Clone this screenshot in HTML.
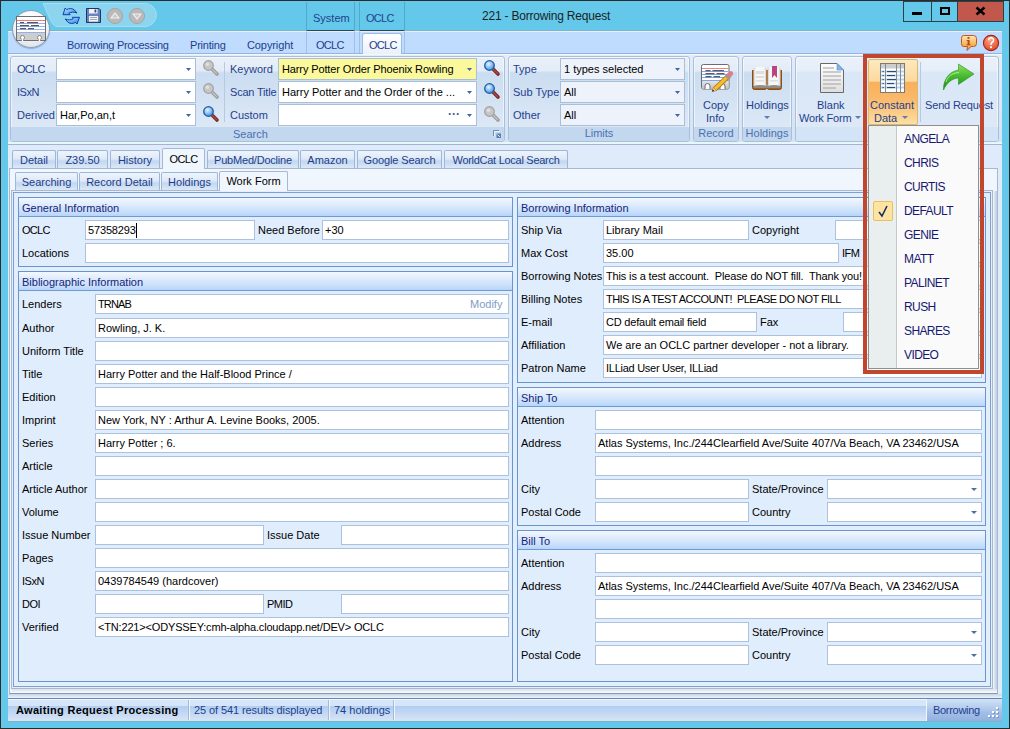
<!DOCTYPE html><html><head><meta charset='utf-8'><style>
*{margin:0;padding:0;box-sizing:border-box}
html,body{width:1010px;height:729px;overflow:hidden;background:#2b2b2b}
body{position:relative;font-family:"Liberation Sans",sans-serif;font-size:11px;color:#000}
div,span{position:absolute}
.t{white-space:pre;line-height:13px}
.fld{background:#fff;border:1px solid #abc1de}
.lbl{white-space:pre;line-height:13px;color:#000}
.grp{border:1px solid #6895d2;background:#e0edfc}
.gh{background:linear-gradient(#f3f8fe 0%,#e2eefd 30%,#c9e0fb 75%,#b7d5fa 100%);border-bottom:1px solid #6f9ad6}
.ght{white-space:pre;line-height:13px;color:#15237a}
.tab{border:1px solid #9db7da;border-bottom:none;border-radius:2px 2px 0 0;background:linear-gradient(#eef4fb 0%,#dfeaf7 45%,#c3d7f0 60%,#dce8f6 100%)}
.tabt{white-space:pre;line-height:13px;color:#1d3e8a}
.rg{border:1px solid #a9c0dc;border-radius:3px;background:linear-gradient(#e9f0f9 0%,#e3ecf7 16%,#cbddf1 19%,#d6e4f4 60%,#e1ebf7 100%);box-shadow:inset 0 0 0 1px rgba(255,255,255,.55)}
.rgl{background:#c3d7ee}
.rgt{white-space:pre;line-height:13px;color:#4a72b0;text-align:center}
.rl{white-space:pre;line-height:13px;color:#1e3f8c}
.mi{white-space:pre;line-height:14px;color:#17186f;font-size:12px;letter-spacing:-.6px}
</style></head><body><div style="left:1px;top:1px;width:1008px;height:727px;background:#63c8ea"></div>
<div class="t" style="left:482px;top:8px;letter-spacing:-0.2px;font-size:12px;line-height:16px;color:#1a1f22">221 - Borrowing Request</div>
<div style="left:903px;top:1px;width:29px;height:21px;border:1px solid #2d3f48;background:#63c8ea"></div>
<div style="left:931px;top:1px;width:27px;height:21px;border:1px solid #2d3f48;background:#63c8ea"></div>
<div style="left:957px;top:1px;width:47px;height:21px;border:1px solid #2d3f48;background:#c1584b"></div>
<div style="left:912px;top:12px;width:10px;height:3px;background:#000"></div>
<div style="left:940px;top:7px;width:10px;height:8px;border:2px solid #000"></div>
<svg style="position:absolute;left:975px;top:6px" width="11" height="10"><path d="M1.5 1.5 L9.5 8.5 M9.5 1.5 L1.5 8.5" stroke="#000" stroke-width="2.4" stroke-linecap="butt"/></svg>
<svg style="position:absolute;left:38px;top:2px" width="124" height="27" viewBox="0 0 124 27">
<path d="M5 1.5 H107 A11.5 11.5 0 0 1 107 24.5 H19 C14 24.5 12 16 5 1.5 Z" fill="#8dd4ee" stroke="#a3def3" stroke-width="1"/>
</svg>
<div style="left:12px;top:10px;width:38px;height:38px;border-radius:50%;background:radial-gradient(circle at 50% 30%,#ffffff 0%,#f4f6f8 50%,#dde3ea 85%,#c9d2dc 100%);border:1px solid #8d9eb3;box-shadow:0 1px 1px rgba(40,60,90,.3);z-index:20"></div>
<svg style="position:absolute;left:16px;top:16px;z-index:21" width="31" height="26" viewBox="0 0 31 26">
<rect x=".5" y=".5" width="29" height="24" fill="#fff" stroke="#6f6f6f"/>
<line x1="1" y1="4.5" x2="29" y2="4.5" stroke="#f07a7a"/>
<line x1="1" y1="7.5" x2="29" y2="7.5" stroke="#8fb2ee"/>
<line x1="1" y1="10.5" x2="29" y2="10.5" stroke="#8fb2ee"/>
<line x1="1" y1="13.5" x2="29" y2="13.5" stroke="#8fb2ee"/>
<line x1="1" y1="16.5" x2="29" y2="16.5" stroke="#8fb2ee"/>
<g fill="#5a5a5a"><rect x="4" y="6" width="4" height="1.2"/><rect x="11" y="6" width="11" height="1.2"/>
<rect x="4" y="9" width="9" height="1.2"/><rect x="15" y="9" width="8" height="1.2"/>
<rect x="4" y="12" width="6" height="1.2"/><rect x="12" y="12" width="6" height="1.2"/></g>
<path d="M1 17 H29 V24.5 H1 Z" fill="#cdcdcd"/>
<path d="M.5 17 V24.5 H29.5 V17" fill="none" stroke="#6f6f6f"/>
<circle cx="6.5" cy="21.5" r="2" fill="#fff" stroke="#707070" stroke-width=".8"/><circle cx="23.5" cy="21.5" r="2" fill="#fff" stroke="#707070" stroke-width=".8"/>
<rect x="5.8" y="22" width="1.4" height="3" fill="#fff"/><rect x="22.8" y="22" width="1.4" height="3" fill="#fff"/>
</svg>
<svg style="position:absolute;left:60px;top:5px" width="24" height="22" viewBox="0 0 24 22">
<defs><linearGradient id="rg1" x1="0" y1="0" x2="1" y2="1"><stop offset="0" stop-color="#e8f6ff"/><stop offset=".5" stop-color="#6fb4f2"/><stop offset="1" stop-color="#2f7ee0"/></linearGradient></defs>
<path d="M3 9.7 L5.2 3 L6.6 4.6 C9 3.3 12 3.1 14.2 4.8 L17 8 C14.2 6.8 11.2 6.8 9 8.2 L10.2 9.7 Z" fill="url(#rg1)" stroke="#0b3fae" stroke-width="1" stroke-linejoin="round"/>
<path d="M19.5 12.3 L17 19 L15.6 17.4 C13.2 18.7 10.2 18.9 8 17.2 L5.2 14 C8 15.2 11 15.2 13.2 13.8 L12.2 12.3 Z" fill="url(#rg1)" stroke="#0b3fae" stroke-width="1" stroke-linejoin="round"/>
</svg>
<svg style="position:absolute;left:86px;top:8px" width="15" height="15" viewBox="0 0 15 15">
<path d="M.5 .5 H13 L14.5 2 V14.5 H.5 Z" fill="#6583c9" stroke="#22335f"/>
<rect x="3" y="1" width="8.5" height="4.5" fill="#f2f5fb"/><rect x="8.5" y="1.5" width="1.8" height="3" fill="#3a4f86"/>
<rect x="2.5" y="7.5" width="10" height="6.5" fill="#f4f4f4" stroke="#4a5f9a" stroke-width=".6"/>
<line x1="4" y1="9.5" x2="11" y2="9.5" stroke="#9aa4b8"/><line x1="4" y1="11.5" x2="11" y2="11.5" stroke="#9aa4b8"/>
</svg>
<svg style="position:absolute;left:105px;top:6px" width="20" height="20" viewBox="0 0 20 20">
<circle cx="10" cy="10" r="7.6" fill="#b9b9b9" stroke="#a3a3a3" stroke-width=".9"/>
<path d="M6 12 L10 7 L14 12 Z" fill="#c8c8c8" stroke="#f2f2f2" stroke-width="1.2" stroke-linejoin="round"/>
</svg>
<svg style="position:absolute;left:127px;top:6px" width="20" height="20" viewBox="0 0 20 20">
<circle cx="10" cy="10" r="7.6" fill="#b9b9b9" stroke="#a3a3a3" stroke-width=".9"/>
<path d="M6 8 L14 8 L10 13 Z" fill="#c8c8c8" stroke="#f2f2f2" stroke-width="1.2" stroke-linejoin="round"/>
</svg>
<div style="left:8px;top:30px;width:994px;height:1px;background:#7eb3c9"></div>
<div style="left:8px;top:31px;width:994px;height:1px;background:#e4effb"></div>
<div style="left:8px;top:32px;width:994px;height:21px;background:#bfdbfe"></div>
<div style="left:8px;top:53px;width:994px;height:1px;background:#92b5e4"></div>
<div style="left:306px;top:2px;width:1px;height:29px;background:rgba(60,110,140,.35)"></div>
<div style="left:306px;top:31px;width:1px;height:22px;background:rgba(90,130,180,.3)"></div>
<div style="left:354px;top:2px;width:1px;height:29px;background:rgba(60,110,140,.35)"></div>
<div style="left:354px;top:31px;width:1px;height:22px;background:rgba(90,130,180,.3)"></div>
<div style="left:359px;top:2px;width:1px;height:29px;background:rgba(60,110,140,.35)"></div>
<div style="left:359px;top:31px;width:1px;height:22px;background:rgba(90,130,180,.3)"></div>
<div style="left:404px;top:2px;width:1px;height:29px;background:rgba(60,110,140,.35)"></div>
<div style="left:404px;top:31px;width:1px;height:22px;background:rgba(90,130,180,.3)"></div>
<div style="left:307px;top:30px;width:47px;height:1px;background:#2a4756"></div>
<div style="left:360px;top:30px;width:44px;height:1px;background:#2a4756"></div>
<div class="t" style="left:313px;top:12px;color:#20448a">System</div>
<div class="t" style="left:366px;top:12px;letter-spacing:-0.7px;color:#20448a">OCLC</div>
<div class="t" style="left:67px;top:39px;color:#1d3f8d;letter-spacing:-.27px">Borrowing Processing</div>
<div class="t" style="left:190px;top:39px;color:#1d3f8d;letter-spacing:-.2px">Printing</div>
<div class="t" style="left:247px;top:39px;color:#1d3f8d;letter-spacing:-.1px">Copyright</div>
<div class="t" style="left:316px;top:39px;letter-spacing:-0.7px;color:#1d3f8d">OCLC</div>
<div style="left:362px;top:33px;width:40px;height:22px;background:linear-gradient(#ffffff,#e9f0fa);border:1px solid #9dbbe3;border-bottom:none;border-radius:3px 3px 0 0"></div>
<div class="t" style="left:369px;top:39px;letter-spacing:-0.7px;color:#1d3f8d">OCLC</div>
<svg style="position:absolute;left:960px;top:34px" width="18" height="18" viewBox="0 0 18 18">
<defs><linearGradient id="ig" x1="0" y1="0" x2="0" y2="1"><stop offset="0" stop-color="#fee6b0"/><stop offset=".6" stop-color="#f8b454"/><stop offset="1" stop-color="#f49a2c"/></linearGradient></defs>
<path d="M3.5 1.5 H13.5 Q16.5 1.5 16.5 4.5 V9.5 Q16.5 12.5 13.5 12.5 H11 L7 16.5 L7.5 12.5 H3.5 Q1.5 12.5 1.5 9.5 V4.5 Q1.5 1.5 3.5 1.5 Z" fill="url(#ig)" stroke="#c4561c" stroke-width="1"/>
<rect x="7.5" y="3" width="2" height="1.8" fill="#b4481e"/>
<path d="M6.7 6 H9.6 V10.2 H10.6 V11.3 H6.6 V10.2 H7.6 V7 H6.7 Z" fill="#b4481e"/>
</svg>
<svg style="position:absolute;left:982px;top:34px" width="18" height="18" viewBox="0 0 18 18">
<defs><radialGradient id="hg" cx=".45" cy=".3" r=".75"><stop offset="0" stop-color="#fca88a"/><stop offset=".6" stop-color="#ec6a48"/><stop offset="1" stop-color="#d8482a"/></radialGradient></defs>
<circle cx="9" cy="9" r="7.6" fill="url(#hg)" stroke="#a8200e" stroke-width="1.1"/>
<path d="M6.6 6.2 Q6.8 3.8 9.2 3.8 Q11.6 3.9 11.5 6.2 Q11.4 7.6 9.8 8.6 Q8.9 9.3 9 11" fill="none" stroke="#fff" stroke-width="1.5"/>
<rect x="8.1" y="12.3" width="1.8" height="1.8" fill="#fff"/>
</svg>
<div style="left:8px;top:54px;width:994px;height:88px;background:linear-gradient(#e3ecf7,#d5e3f4);border-top:1px solid #f4f8fc"></div>
<div style="left:8px;top:142px;width:994px;height:2px;background:#e6f8fd"></div>
<div style="left:8px;top:144px;width:994px;height:1px;background:#a2b5cc"></div>
<div style="left:8px;top:145px;width:994px;height:554px;background:#dfeafb"></div>
<div class="rg" style="left:10px;top:56px;width:495px;height:86px;"></div>
<div class="rgl" style="left:11px;top:127px;width:493px;height:14px;border-radius:0 0 2px 2px"></div>
<div class="rgt" style="left:233px;top:128px">Search</div>
<div class="rg" style="left:508px;top:56px;width:182px;height:86px;"></div>
<div class="rgl" style="left:509px;top:127px;width:180px;height:14px;border-radius:0 0 2px 2px"></div>
<div class="rgt" style="left:508px;top:127px;width:182px">Limits</div>
<div class="rg" style="left:693px;top:56px;width:46px;height:86px;"></div>
<div class="rgl" style="left:694px;top:127px;width:44px;height:14px;border-radius:0 0 2px 2px"></div>
<div class="rgt" style="left:693px;top:127px;width:46px">Record</div>
<div class="rg" style="left:742px;top:56px;width:50px;height:86px;"></div>
<div class="rgl" style="left:743px;top:127px;width:48px;height:14px;border-radius:0 0 2px 2px"></div>
<div class="rgt" style="left:742px;top:127px;width:50px">Holdings</div>
<div class="rg" style="left:795px;top:56px;width:204px;height:86px;background:linear-gradient(#eaf1fa 0%,#e6eef9 16%,#dae7f6 19%,#dde9f7 100%)"></div>
<div class="rgl" style="left:796px;top:127px;width:202px;height:14px;border-radius:0 0 2px 2px;background:#d3e4f7"></div>
<div class="rl" style="left:17px;top:63px;letter-spacing:-0.7px;">OCLC</div>
<div style="left:56px;top:58px;width:140px;height:22px;background:#fff;border:1px solid #a9bfd8"></div>
<svg style="position:absolute;left:185px;top:68px" width="7" height="4" viewBox="0 0 7 4"><path d="M1 0 H6 L3.5 3 Z" fill="#3d66a8"/></svg>
<svg style="position:absolute;left:202px;top:59px" width="18" height="18" viewBox="0 0 18 18">
<line x1="10.5" y1="10.5" x2="15" y2="15" stroke="#9c9c9c" stroke-width="3.6" stroke-linecap="round"/>
<line x1="10.5" y1="10.5" x2="14.5" y2="14.5" stroke="#c4c4c4" stroke-width="1.2" stroke-linecap="round"/>
<circle cx="6.5" cy="6.5" r="4.8" fill="#c6c6c6" stroke="#a2a2a2" stroke-width="1.2"/>
<circle cx="5.5" cy="5.3" r="1.8" fill="#e0e0e0"/>
</svg>
<div class="rl" style="left:17px;top:86px;letter-spacing:-0.5px;">ISxN</div>
<div style="left:56px;top:81px;width:140px;height:22px;background:#fff;border:1px solid #a9bfd8"></div>
<svg style="position:absolute;left:185px;top:91px" width="7" height="4" viewBox="0 0 7 4"><path d="M1 0 H6 L3.5 3 Z" fill="#3d66a8"/></svg>
<svg style="position:absolute;left:202px;top:82px" width="18" height="18" viewBox="0 0 18 18">
<line x1="10.5" y1="10.5" x2="15" y2="15" stroke="#9c9c9c" stroke-width="3.6" stroke-linecap="round"/>
<line x1="10.5" y1="10.5" x2="14.5" y2="14.5" stroke="#c4c4c4" stroke-width="1.2" stroke-linecap="round"/>
<circle cx="6.5" cy="6.5" r="4.8" fill="#c6c6c6" stroke="#a2a2a2" stroke-width="1.2"/>
<circle cx="5.5" cy="5.3" r="1.8" fill="#e0e0e0"/>
</svg>
<div class="rl" style="left:17px;top:109px;">Derived</div>
<div style="left:56px;top:104px;width:140px;height:22px;background:#fff;border:1px solid #a9bfd8"></div>
<div class="t" style="left:60px;top:109px;">Har,Po,an,t</div>
<svg style="position:absolute;left:185px;top:114px" width="7" height="4" viewBox="0 0 7 4"><path d="M1 0 H6 L3.5 3 Z" fill="#3d66a8"/></svg>
<svg style="position:absolute;left:202px;top:105px" width="18" height="18" viewBox="0 0 18 18">
<defs><radialGradient id="bl202105" cx=".4" cy=".35" r=".7"><stop offset="0" stop-color="#e6f4ff"/><stop offset=".5" stop-color="#8ec3f5"/><stop offset="1" stop-color="#3c82d6"/></radialGradient></defs>
<line x1="10.5" y1="10.5" x2="15" y2="15" stroke="#7a2a26" stroke-width="3.6" stroke-linecap="round"/>
<line x1="10.5" y1="10.5" x2="14.5" y2="14.5" stroke="#a84a44" stroke-width="1.4" stroke-linecap="round"/>
<circle cx="6.5" cy="6.5" r="4.8" fill="url(#bl202105)" stroke="#1f5ea8" stroke-width="1.3"/>
</svg>
<div style="left:224px;top:62px;width:1px;height:60px;background:#b6c9e0"></div>
<div class="rl" style="left:230px;top:63px;">Keyword</div>
<div class="rl" style="left:230px;top:86px;letter-spacing:-0.2px;">Scan Title</div>
<div class="rl" style="left:230px;top:109px;">Custom</div>
<div style="left:278px;top:58px;width:199px;height:22px;background:#fbf99c;border:1px solid #a9bfd8"></div>
<div class="t" style="left:282px;top:63px;letter-spacing:-0.12px;">Harry Potter Order Phoenix Rowling</div>
<svg style="position:absolute;left:466px;top:68px" width="7" height="4" viewBox="0 0 7 4"><path d="M1 0 H6 L3.5 3 Z" fill="#3d66a8"/></svg>
<div style="left:278px;top:81px;width:199px;height:22px;background:#fff;border:1px solid #a9bfd8"></div>
<div class="t" style="left:282px;top:86px;">Harry Potter and the Order of the ...</div>
<svg style="position:absolute;left:466px;top:91px" width="7" height="4" viewBox="0 0 7 4"><path d="M1 0 H6 L3.5 3 Z" fill="#3d66a8"/></svg>
<div style="left:278px;top:104px;width:199px;height:22px;background:#fff;border:1px solid #a9bfd8"></div>
<svg style="position:absolute;left:466px;top:114px" width="7" height="4" viewBox="0 0 7 4"><path d="M1 0 H6 L3.5 3 Z" fill="#3d66a8"/></svg>
<div class="t" style="left:448px;top:108px;color:#3c5c9c;font-size:12px;font-weight:bold">···</div>
<svg style="position:absolute;left:483px;top:59px" width="18" height="18" viewBox="0 0 18 18">
<defs><radialGradient id="bl48359" cx=".4" cy=".35" r=".7"><stop offset="0" stop-color="#e6f4ff"/><stop offset=".5" stop-color="#8ec3f5"/><stop offset="1" stop-color="#3c82d6"/></radialGradient></defs>
<line x1="10.5" y1="10.5" x2="15" y2="15" stroke="#7a2a26" stroke-width="3.6" stroke-linecap="round"/>
<line x1="10.5" y1="10.5" x2="14.5" y2="14.5" stroke="#a84a44" stroke-width="1.4" stroke-linecap="round"/>
<circle cx="6.5" cy="6.5" r="4.8" fill="url(#bl48359)" stroke="#1f5ea8" stroke-width="1.3"/>
</svg>
<svg style="position:absolute;left:483px;top:82px" width="18" height="18" viewBox="0 0 18 18">
<defs><radialGradient id="bl48382" cx=".4" cy=".35" r=".7"><stop offset="0" stop-color="#e6f4ff"/><stop offset=".5" stop-color="#8ec3f5"/><stop offset="1" stop-color="#3c82d6"/></radialGradient></defs>
<line x1="10.5" y1="10.5" x2="15" y2="15" stroke="#7a2a26" stroke-width="3.6" stroke-linecap="round"/>
<line x1="10.5" y1="10.5" x2="14.5" y2="14.5" stroke="#a84a44" stroke-width="1.4" stroke-linecap="round"/>
<circle cx="6.5" cy="6.5" r="4.8" fill="url(#bl48382)" stroke="#1f5ea8" stroke-width="1.3"/>
</svg>
<svg style="position:absolute;left:483px;top:105px" width="18" height="18" viewBox="0 0 18 18">
<line x1="10.5" y1="10.5" x2="15" y2="15" stroke="#9c9c9c" stroke-width="3.6" stroke-linecap="round"/>
<line x1="10.5" y1="10.5" x2="14.5" y2="14.5" stroke="#c4c4c4" stroke-width="1.2" stroke-linecap="round"/>
<circle cx="6.5" cy="6.5" r="4.8" fill="#c6c6c6" stroke="#a2a2a2" stroke-width="1.2"/>
<circle cx="5.5" cy="5.3" r="1.8" fill="#e0e0e0"/>
</svg>
<svg style="position:absolute;left:493px;top:130px" width="9" height="9" viewBox="0 0 9 9"><path d="M.5 6 V.5 H6" fill="none" stroke="#6a8cbc"/><path d="M1.5 6.5 V1.5 H6.5" fill="none" stroke="#fff" stroke-opacity=".7"/><rect x="3.5" y="3.5" width="4.5" height="4.5" fill="#5a7fb0"/><path d="M4.5 4.5 L7 7" stroke="#fff" stroke-width=".8"/></svg>
<div class="rl" style="left:513px;top:63px;">Type</div>
<div style="left:560px;top:58px;width:125px;height:22px;background:#eef3fb;border:1px solid #a9bfd8"></div>
<div class="t" style="left:564px;top:63px;">1 types selected</div>
<svg style="position:absolute;left:674px;top:68px" width="7" height="4" viewBox="0 0 7 4"><path d="M1 0 H6 L3.5 3 Z" fill="#3d66a8"/></svg>
<div class="rl" style="left:513px;top:86px;">Sub Type</div>
<div style="left:560px;top:81px;width:125px;height:22px;background:#eef3fb;border:1px solid #a9bfd8"></div>
<div class="t" style="left:564px;top:86px;">All</div>
<svg style="position:absolute;left:674px;top:91px" width="7" height="4" viewBox="0 0 7 4"><path d="M1 0 H6 L3.5 3 Z" fill="#3d66a8"/></svg>
<div class="rl" style="left:513px;top:109px;">Other</div>
<div style="left:560px;top:104px;width:125px;height:22px;background:#eef3fb;border:1px solid #a9bfd8"></div>
<div class="t" style="left:564px;top:109px;">All</div>
<svg style="position:absolute;left:674px;top:114px" width="7" height="4" viewBox="0 0 7 4"><path d="M1 0 H6 L3.5 3 Z" fill="#3d66a8"/></svg>
<svg style="position:absolute;left:700px;top:63px" width="33" height="30" viewBox="0 0 33 30">
<defs><linearGradient id="cg" x1="0" y1="0" x2="0" y2="1"><stop offset="0" stop-color="#e4e4e4"/><stop offset="1" stop-color="#c4c4c4"/></linearGradient>
<linearGradient id="pg" x1="0" y1="0" x2="1" y2="1"><stop offset="0" stop-color="#ffe24a"/><stop offset="1" stop-color="#e0a010"/></linearGradient></defs>
<rect x="1.5" y="1.5" width="27.5" height="24.5" rx="1.8" fill="#fff" stroke="#6c6c6c"/>
<rect x="2" y="18" width="26.5" height="7.5" fill="url(#cg)"/>
<line x1="2" y1="5.5" x2="28.5" y2="5.5" stroke="#f48080" stroke-width="1"/>
<g stroke="#7aa6ee" stroke-width="1"><line x1="2" y1="8.5" x2="28.5" y2="8.5"/><line x1="2" y1="11.5" x2="28.5" y2="11.5"/><line x1="2" y1="14.5" x2="28.5" y2="14.5"/><line x1="2" y1="17.5" x2="28.5" y2="17.5"/></g>
<g fill="#5e5e5e"><rect x="5.5" y="7" width="5" height="1.2"/><rect x="12.5" y="7" width="11.5" height="1.2"/><rect x="5.5" y="10" width="9" height="1.2"/><rect x="16.5" y="10" width="8" height="1.2"/><rect x="5.5" y="13" width="6" height="1.2"/><rect x="13.5" y="13" width="6.5" height="1.2"/></g>
<path d="M5 26 V23 A2.5 2.5 0 0 1 10 23 V26" fill="#fff" stroke="#6c6c6c"/>
<path d="M20 26 V23 A2.5 2.5 0 0 1 25 23 V26" fill="#fff" stroke="#6c6c6c"/>
<line x1="15" y1="26" x2="29.5" y2="12" stroke="#b86a10" stroke-width="5" stroke-linecap="butt"/>
<line x1="15" y1="26" x2="29.5" y2="12" stroke="url(#pg)" stroke-width="3.2" stroke-linecap="butt"/>
<line x1="28" y1="13.4" x2="31" y2="10.5" stroke="#e27a8a" stroke-width="4.5" stroke-linecap="round"/>
<line x1="27" y1="14.4" x2="28.5" y2="13" stroke="#9a9a9a" stroke-width="4.6"/>
<path d="M12.2 28.6 L13.4 24.3 L16.6 27.6 Z" fill="#f8d8b0" stroke="#b86a10" stroke-width=".6"/>
<path d="M12.2 28.6 L12.8 26.6 L14.3 28.1 Z" fill="#111"/>
</svg>
<div class="rl" style="left:703px;top:99px;">Copy</div>
<div class="rl" style="left:706px;top:112px;">Info</div>
<svg style="position:absolute;left:751px;top:65px" width="33" height="26" viewBox="0 0 33 26">
<defs><linearGradient id="lp" x1="0" y1="0" x2="1" y2="0"><stop offset="0" stop-color="#d0d0d0"/><stop offset=".2" stop-color="#f8f8f8"/><stop offset=".85" stop-color="#f4f4f4"/><stop offset="1" stop-color="#c8c8c8"/></linearGradient>
<linearGradient id="rp" x1="0" y1="0" x2="1" y2="0"><stop offset="0" stop-color="#c8c8c8"/><stop offset=".15" stop-color="#f6f6f6"/><stop offset=".8" stop-color="#f8f8f8"/><stop offset="1" stop-color="#cfcfcf"/></linearGradient></defs>
<path d="M1.5 5 V22.5 Q1.5 24.5 3.5 24.5 H14 L15.8 23.3 L17.6 24.5 H28.5 Q30.5 24.5 30.5 22.5 V5" fill="#a0601e" stroke="#8a4e14" stroke-width="1"/>
<rect x="2.5" y="19.5" width="27" height="3.5" fill="#8e8e8e"/>
<path d="M2.5 3 Q9 0.3 15.3 3 V21 Q9 18.8 2.5 21 Z" fill="url(#lp)"/>
<path d="M16.7 3 Q23 0.3 29.5 3 V21 Q23 18.8 16.7 21 Z" fill="url(#rp)"/>
<g fill="#dedede"><rect x="5" y="6" width="8" height="3"/><rect x="5" y="11" width="8" height="2"/><rect x="5" y="15" width="8" height="1.5"/><rect x="19" y="15" width="8" height="1.5"/></g>
<path d="M21 1 H26 V13 L23.5 10 L21 13 Z" fill="#b84580"/>
</svg>
<div class="rl" style="left:746px;top:99px;">Holdings</div>
<div style="left:764px;top:116px;width:0;height:0;border-left:3px solid transparent;border-right:3px solid transparent;border-top:3px solid #5a7fb0"></div>
<svg style="position:absolute;left:819px;top:62px" width="27" height="32" viewBox="0 0 27 32">
<defs><linearGradient id="dg" x1="0" y1="0" x2="0" y2="1"><stop offset="0" stop-color="#ffffff"/><stop offset="1" stop-color="#dedede"/></linearGradient></defs>
<path d="M1.5 1.5 H18 L24.5 8 V30.5 H1.5 Z" fill="url(#dg)" stroke="#6a6a6a"/>
<path d="M18 1.5 L24.5 8 H18 Z" fill="#7fb6ec" stroke="#5a95d0" stroke-width=".6"/>
<g stroke="#a8a8a8" stroke-width="1.1"><line x1="4" y1="6" x2="15" y2="6"/><line x1="4" y1="10" x2="22" y2="10"/><line x1="4" y1="14" x2="22" y2="14"/><line x1="4" y1="18" x2="22" y2="18"/><line x1="4" y1="22" x2="22" y2="22"/><line x1="4" y1="26" x2="17" y2="26"/></g>
</svg>
<div class="rl" style="left:817px;top:99px;">Blank</div>
<div class="rl" style="left:799px;top:112px;letter-spacing:-0.2px;">Work Form</div>
<div style="left:855px;top:116px;width:0;height:0;border-left:3px solid transparent;border-right:3px solid transparent;border-top:3px solid #5a7fb0"></div>
<div style="left:868px;top:59px;width:50px;height:66px;background:linear-gradient(#fde9bd 0%,#fcd9a0 33%,#f9b15a 35%,#fab86a 60%,#fcd492 90%,#fde0a6 100%);border:1px solid #d9b870;border-radius:2px"></div>
<svg style="position:absolute;left:880px;top:63px" width="26" height="30" viewBox="0 0 26 30">
<rect x=".5" y=".5" width="24" height="29" fill="#fff" stroke="#7a7a7a"/>
<rect x="1" y="1" width="23" height="4.5" fill="#cdcdcd"/>
<g fill="#b3d6f7"><rect x="1" y="7.5" width="23" height="2"/><rect x="1" y="11.5" width="23" height="2"/><rect x="1" y="15.5" width="23" height="2"/><rect x="1" y="19.5" width="23" height="2"/><rect x="1" y="23.5" width="23" height="2"/></g>
<g fill="#3a4a66"><rect x="7" y="8" width="9" height="1.1"/><rect x="7" y="12" width="8" height="1.1"/><rect x="7" y="16" width="9" height="1.1"/><rect x="7" y="20" width="7" height="1.1"/><rect x="7" y="24" width="8" height="1.1"/>
<rect x="2.5" y="8" width="1.3" height="1.1"/><rect x="2.5" y="12" width="1.3" height="1.1"/><rect x="2.5" y="16" width="1.3" height="1.1"/><rect x="2.5" y="20" width="1.3" height="1.1"/><rect x="2.5" y="24" width="1.3" height="1.1"/></g>
<line x1="5.5" y1="1" x2="5.5" y2="29" stroke="#8a8a8a"/><line x1="16.5" y1="1" x2="16.5" y2="29" stroke="#8a8a8a"/><line x1="20.5" y1="1" x2="20.5" y2="29" stroke="#8a8a8a"/>
</svg>
<div class="rl" style="left:870px;top:99px;">Constant</div>
<div class="rl" style="left:874px;top:112px;">Data</div>
<div style="left:902px;top:116px;width:0;height:0;border-left:3px solid transparent;border-right:3px solid transparent;border-top:3px solid #5a7fb0"></div>
<div style="left:920px;top:62px;width:1px;height:60px;background:#b6c9e0"></div>
<svg style="position:absolute;left:942px;top:63px" width="34" height="29" viewBox="0 0 34 29">
<defs><linearGradient id="ga" x1="0" y1="0" x2="0" y2="1"><stop offset="0" stop-color="#8fe060"/><stop offset=".5" stop-color="#42b82c"/><stop offset="1" stop-color="#1f8f18"/></linearGradient></defs>
<path d="M1.5 27 C1 17 7 8.5 16.5 7 L16.5 1 L32 11 L16.5 21.5 L16.5 15 C10 15.5 5 19.5 1.5 27 Z" fill="url(#ga)" stroke="#2a8f20" stroke-width=".6"/>
<path d="M4 19 C6 13 10 10 17 9.5" fill="none" stroke="#c4f5a8" stroke-width="1" opacity=".8"/>
</svg>
<div class="rl" style="left:925px;top:99px;letter-spacing:-0.15px;">Send Request</div>
<div style="left:9px;top:168px;width:989px;height:526px;background:#f0f6fd;border:1px solid #a7b9d0;border-bottom-color:#8499b8"></div>
<div class="tab" style="left:12px;top:150px;width:44px;height:18px;"></div>
<div class="tabt" style="left:12px;top:154px;width:44px;text-align:center;">Detail</div>
<div class="tab" style="left:57px;top:150px;width:51px;height:18px;"></div>
<div class="tabt" style="left:57px;top:154px;width:51px;text-align:center;">Z39.50</div>
<div class="tab" style="left:110px;top:150px;width:50px;height:18px;"></div>
<div class="tabt" style="left:110px;top:154px;width:50px;text-align:center;">History</div>
<div class="tab" style="left:207px;top:150px;width:92px;height:18px;"></div>
<div class="tabt" style="left:207px;top:154px;width:92px;text-align:center;letter-spacing:-0.2px;">PubMed/Docline</div>
<div class="tab" style="left:300px;top:150px;width:55px;height:18px;"></div>
<div class="tabt" style="left:300px;top:154px;width:55px;text-align:center;">Amazon</div>
<div class="tab" style="left:357px;top:150px;width:85px;height:18px;"></div>
<div class="tabt" style="left:357px;top:154px;width:85px;text-align:center;letter-spacing:-0.1px;">Google Search</div>
<div class="tab" style="left:444px;top:150px;width:124px;height:18px;"></div>
<div class="tabt" style="left:444px;top:154px;width:124px;text-align:center;letter-spacing:-0.28px;">WorldCat Local Search</div>
<div style="left:162px;top:148px;width:43px;height:21px;background:#f0f6fd;border:1px solid #a7b9d0;border-bottom:none;border-radius:2px 2px 0 0"></div>
<div class="tabt" style="left:162px;top:153px;width:43px;text-align:center;color:#000;letter-spacing:-.7px">OCLC</div>
<div style="left:11px;top:190px;width:982px;height:499px;background:#e5eefa;border:1px solid #a7b9d0"></div>
<div class="tab" style="left:15px;top:172px;width:63px;height:18px;"></div>
<div class="tabt" style="left:15px;top:176px;width:63px;text-align:center">Searching</div>
<div class="tab" style="left:79px;top:172px;width:81px;height:18px;"></div>
<div class="tabt" style="left:79px;top:176px;width:81px;text-align:center">Record Detail</div>
<div class="tab" style="left:161px;top:172px;width:57px;height:18px;"></div>
<div class="tabt" style="left:161px;top:176px;width:57px;text-align:center">Holdings</div>
<div style="left:219px;top:171px;width:69px;height:20px;background:#f0f6fd;border:1px solid #a7b9d0;border-bottom:none;border-radius:2px 2px 0 0"></div>
<div class="tabt" style="left:219px;top:175px;width:69px;text-align:center;color:#000">Work Form</div>
<div style="left:12px;top:689px;width:985px;height:4px;background:linear-gradient(#d8e0eb,#fbfdff)"></div>
<div style="left:993px;top:191px;width:4px;height:498px;background:linear-gradient(90deg,#f1f5fa,#bccbdf)"></div>
<div style="left:13px;top:192px;width:978px;height:495px;border:1px solid #7aa0d4;background:#e3eefb"></div>
<div class="grp" style="left:18px;top:197px;width:495px;height:70px;"></div>
<div class="gh" style="left:19px;top:198px;width:493px;height:19px;"></div>
<div class="ght" style="left:22px;top:202px;">General Information</div>
<div class="lbl" style="left:22px;top:224px;letter-spacing:-0.7px;">OCLC</div>
<div class="fld" style="left:85px;top:220px;width:170px;height:20px;"></div>
<div class="t" style="left:88px;top:224px;letter-spacing:-0.15px;">57358293</div>
<div style="left:136px;top:223px;width:1px;height:15px;background:#000"></div>
<div class="lbl" style="left:258px;top:224px;">Need Before</div>
<div class="fld" style="left:322px;top:220px;width:187px;height:20px;"></div>
<div class="t" style="left:325px;top:224px;">+30</div>
<div class="lbl" style="left:22px;top:247px;">Locations</div>
<div class="fld" style="left:85px;top:243px;width:424px;height:20px;"></div>
<div class="grp" style="left:18px;top:271px;width:495px;height:411px;"></div>
<div class="gh" style="left:19px;top:272px;width:493px;height:19px;"></div>
<div class="ght" style="left:22px;top:276px;">Bibliographic Information</div>
<div class="lbl" style="left:22px;top:298px;">Lenders</div>
<div class="fld" style="left:95px;top:294px;width:414px;height:20px;"></div>
<div class="t" style="left:98px;top:298px;letter-spacing:-0.86px;">TRNAB</div>
<div class="lbl" style="left:22px;top:322px;">Author</div>
<div class="fld" style="left:95px;top:318px;width:414px;height:20px;"></div>
<div class="t" style="left:98px;top:322px;">Rowling, J. K.</div>
<div class="lbl" style="left:22px;top:345px;">Uniform Title</div>
<div class="fld" style="left:95px;top:341px;width:414px;height:20px;"></div>
<div class="lbl" style="left:22px;top:368px;">Title</div>
<div class="fld" style="left:95px;top:364px;width:414px;height:20px;"></div>
<div class="t" style="left:98px;top:368px;">Harry Potter and the Half-Blood Prince /</div>
<div class="lbl" style="left:22px;top:391px;">Edition</div>
<div class="fld" style="left:95px;top:387px;width:414px;height:20px;"></div>
<div class="lbl" style="left:22px;top:414px;">Imprint</div>
<div class="fld" style="left:95px;top:410px;width:414px;height:20px;"></div>
<div class="t" style="left:98px;top:414px;">New York, NY : Arthur A. Levine Books, 2005.</div>
<div class="lbl" style="left:22px;top:437px;">Series</div>
<div class="fld" style="left:95px;top:433px;width:414px;height:20px;"></div>
<div class="t" style="left:98px;top:437px;">Harry Potter ; 6.</div>
<div class="lbl" style="left:22px;top:460px;">Article</div>
<div class="fld" style="left:95px;top:456px;width:414px;height:20px;"></div>
<div class="lbl" style="left:22px;top:483px;">Article Author</div>
<div class="fld" style="left:95px;top:479px;width:414px;height:20px;"></div>
<div class="lbl" style="left:22px;top:506px;">Volume</div>
<div class="fld" style="left:95px;top:502px;width:414px;height:20px;"></div>
<div class="lbl" style="left:22px;top:529px;">Issue Number</div>
<div class="fld" style="left:95px;top:525px;width:169px;height:20px;"></div>
<div class="lbl" style="left:267px;top:529px;">Issue Date</div>
<div class="fld" style="left:341px;top:525px;width:168px;height:20px;"></div>
<div class="lbl" style="left:22px;top:552px;">Pages</div>
<div class="fld" style="left:95px;top:548px;width:414px;height:20px;"></div>
<div class="lbl" style="left:22px;top:575px;letter-spacing:-0.5px;">ISxN</div>
<div class="fld" style="left:95px;top:571px;width:414px;height:20px;"></div>
<div class="t" style="left:98px;top:575px;">0439784549 (hardcover)</div>
<div class="lbl" style="left:22px;top:598px;letter-spacing:-0.5px;">DOI</div>
<div class="fld" style="left:95px;top:594px;width:169px;height:20px;"></div>
<div class="lbl" style="left:267px;top:598px;letter-spacing:-0.5px;">PMID</div>
<div class="fld" style="left:341px;top:594px;width:168px;height:20px;"></div>
<div class="lbl" style="left:22px;top:621px;">Verified</div>
<div class="fld" style="left:95px;top:617px;width:414px;height:20px;"></div>
<div class="t" style="left:98px;top:621px;letter-spacing:-0.17px;">&lt;TN:221&gt;&lt;ODYSSEY:cmh-alpha.cloudapp.net/DEV&gt; OCLC</div>
<div class="t" style="left:470px;top:298px;color:#7f9cc8">Modify</div>
<div class="grp" style="left:517px;top:197px;width:469px;height:186px;"></div>
<div class="gh" style="left:518px;top:198px;width:467px;height:19px;"></div>
<div class="ght" style="left:521px;top:202px;">Borrowing Information</div>
<div class="lbl" style="left:521px;top:224px;">Ship Via</div>
<div class="fld" style="left:603px;top:220px;width:146px;height:20px;"></div>
<div class="t" style="left:606px;top:224px;">Library Mail</div>
<div class="lbl" style="left:752px;top:224px;">Copyright</div>
<div class="fld" style="left:835px;top:220px;width:147px;height:20px;"></div>
<div class="lbl" style="left:521px;top:247px;">Max Cost</div>
<div class="fld" style="left:603px;top:243px;width:236px;height:20px;"></div>
<div class="t" style="left:606px;top:247px;">35.00</div>
<div class="lbl" style="left:842px;top:247px;letter-spacing:-0.5px;">IFM</div>
<div class="fld" style="left:870px;top:243px;width:112px;height:20px;"></div>
<div class="lbl" style="left:521px;top:270px;">Borrowing Notes</div>
<div class="fld" style="left:603px;top:266px;width:379px;height:20px;"></div>
<div class="t" style="left:606px;top:270px;letter-spacing:-0.15px;">This is a test account.  Please do NOT fill.  Thank you!</div>
<div class="lbl" style="left:521px;top:293px;">Billing Notes</div>
<div class="fld" style="left:603px;top:289px;width:379px;height:20px;"></div>
<div class="t" style="left:606px;top:293px;letter-spacing:-0.54px;">THIS IS A TEST ACCOUNT!  PLEASE DO NOT FILL</div>
<div class="lbl" style="left:521px;top:316px;">E-mail</div>
<div class="fld" style="left:603px;top:312px;width:154px;height:20px;"></div>
<div class="t" style="left:606px;top:316px;letter-spacing:-0.2px;">CD default email field</div>
<div class="lbl" style="left:760px;top:316px;">Fax</div>
<div class="fld" style="left:843px;top:312px;width:139px;height:20px;"></div>
<div class="lbl" style="left:521px;top:339px;">Affiliation</div>
<div class="fld" style="left:603px;top:335px;width:379px;height:20px;"></div>
<div class="t" style="left:606px;top:339px;">We are an OCLC partner developer - not a library.</div>
<div class="lbl" style="left:521px;top:362px;">Patron Name</div>
<div class="fld" style="left:603px;top:358px;width:379px;height:20px;"></div>
<div class="t" style="left:606px;top:362px;letter-spacing:-0.27px;">ILLiad User User, ILLiad</div>
<div class="grp" style="left:517px;top:387px;width:469px;height:139px;"></div>
<div class="gh" style="left:518px;top:388px;width:467px;height:19px;"></div>
<div class="ght" style="left:521px;top:392px;">Ship To</div>
<div class="lbl" style="left:521px;top:414px;">Attention</div>
<div class="fld" style="left:595px;top:410px;width:387px;height:20px;"></div>
<div class="lbl" style="left:521px;top:437px;">Address</div>
<div class="fld" style="left:595px;top:433px;width:387px;height:20px;"></div>
<div class="t" style="left:598px;top:437px;">Atlas Systems, Inc./244Clearfield Ave/Suite 407/Va Beach, VA 23462/USA</div>
<div class="fld" style="left:595px;top:456px;width:387px;height:20px;"></div>
<div class="lbl" style="left:521px;top:483px;">City</div>
<div class="fld" style="left:595px;top:479px;width:154px;height:20px;"></div>
<div class="lbl" style="left:752px;top:483px;">State/Province</div>
<div class="fld" style="left:827px;top:479px;width:155px;height:20px;"></div>
<div style="left:971px;top:488px;width:0;height:0;border-left:3px solid transparent;border-right:3px solid transparent;border-top:3px solid #4c6f9f"></div>
<div class="lbl" style="left:521px;top:506px;">Postal Code</div>
<div class="fld" style="left:595px;top:502px;width:154px;height:20px;"></div>
<div class="lbl" style="left:752px;top:506px;">Country</div>
<div class="fld" style="left:827px;top:502px;width:155px;height:20px;"></div>
<div style="left:971px;top:511px;width:0;height:0;border-left:3px solid transparent;border-right:3px solid transparent;border-top:3px solid #4c6f9f"></div>
<div class="grp" style="left:517px;top:530px;width:469px;height:152px;"></div>
<div class="gh" style="left:518px;top:531px;width:467px;height:19px;"></div>
<div class="ght" style="left:521px;top:535px;">Bill To</div>
<div class="lbl" style="left:521px;top:557px;">Attention</div>
<div class="fld" style="left:595px;top:553px;width:387px;height:20px;"></div>
<div class="lbl" style="left:521px;top:580px;">Address</div>
<div class="fld" style="left:595px;top:576px;width:387px;height:20px;"></div>
<div class="t" style="left:598px;top:580px;">Atlas Systems, Inc./244Clearfield Ave/Suite 407/Va Beach, VA 23462/USA</div>
<div class="fld" style="left:595px;top:599px;width:387px;height:20px;"></div>
<div class="lbl" style="left:521px;top:626px;">City</div>
<div class="fld" style="left:595px;top:622px;width:154px;height:20px;"></div>
<div class="lbl" style="left:752px;top:626px;">State/Province</div>
<div class="fld" style="left:827px;top:622px;width:155px;height:20px;"></div>
<div style="left:971px;top:631px;width:0;height:0;border-left:3px solid transparent;border-right:3px solid transparent;border-top:3px solid #4c6f9f"></div>
<div class="lbl" style="left:521px;top:649px;">Postal Code</div>
<div class="fld" style="left:595px;top:645px;width:154px;height:20px;"></div>
<div class="lbl" style="left:752px;top:649px;">Country</div>
<div class="fld" style="left:827px;top:645px;width:155px;height:20px;"></div>
<div style="left:971px;top:654px;width:0;height:0;border-left:3px solid transparent;border-right:3px solid transparent;border-top:3px solid #4c6f9f"></div>
<div style="left:8px;top:694px;width:994px;height:4px;background:linear-gradient(#c9d5e5,#edf2f9)"></div>
<div style="left:8px;top:698px;width:994px;height:1px;background:#6388bb"></div>
<div style="left:8px;top:699px;width:994px;height:22px;background:linear-gradient(#f4f8fc 0px,#f4f8fc 1px,#d7e5f8 1px,#d7e5f8 7px,#b0cdf2 7px,#d8e5f5 22px)"></div>
<div style="left:8px;top:721px;width:994px;height:1px;background:#78b5cc"></div>
<div class="t" style="left:16px;top:704px;letter-spacing:0.3px;font-weight:bold;font-size:11px;color:#000">Awaiting Request Processing</div>
<div style="left:188px;top:700px;width:1px;height:20px;background:#a3b9d8"></div>
<div style="left:189px;top:700px;width:1px;height:20px;background:rgba(255,255,255,.7)"></div>
<div class="t" style="left:194px;top:704px;color:#1e3f8c;letter-spacing:-.1px">25 of 541 results displayed</div>
<div style="left:328px;top:700px;width:1px;height:20px;background:#a3b9d8"></div>
<div style="left:329px;top:700px;width:1px;height:20px;background:rgba(255,255,255,.7)"></div>
<div class="t" style="left:334px;top:704px;color:#1e3f8c">74 holdings</div>
<div style="left:393px;top:700px;width:1px;height:20px;background:#a3b9d8"></div>
<div style="left:394px;top:700px;width:1px;height:20px;background:rgba(255,255,255,.7)"></div>
<div style="left:926px;top:699px;width:76px;height:22px;background:linear-gradient(#d3e3f6 0%,#b4cced 40%,#a3bfe8 60%,#94b0de 100%);border-left:1px solid #f2f7fd"></div>
<div class="t" style="left:933px;top:704px;letter-spacing:-0.3px;color:#1e3f8c">Borrowing</div>
<svg style="position:absolute;left:986px;top:706px" width="14" height="13" viewBox="0 0 14 13">
<g fill="#7f9bc8"><rect x="11" y="2" width="2" height="2"/><rect x="7" y="6" width="2" height="2"/><rect x="11" y="6" width="2" height="2"/><rect x="3" y="10" width="2" height="2"/><rect x="7" y="10" width="2" height="2"/><rect x="11" y="10" width="2" height="2"/></g>
<g fill="#fff"><rect x="10" y="1" width="2" height="2"/><rect x="6" y="5" width="2" height="2"/><rect x="10" y="5" width="2" height="2"/><rect x="2" y="9" width="2" height="2"/><rect x="6" y="9" width="2" height="2"/><rect x="10" y="9" width="2" height="2"/></g>
</svg>
<div style="left:868px;top:125px;width:111px;height:244px;background:#fafafa;border:1px solid #8f8f8f"></div>
<div style="left:869px;top:126px;width:28px;height:242px;background:#e9eeee;border-right:1px solid #c5c9ca"></div>
<div class="mi" style="left:904px;top:132px">ANGELA</div>
<div class="mi" style="left:904px;top:156px">CHRIS</div>
<div class="mi" style="left:904px;top:180px">CURTIS</div>
<div class="mi" style="left:904px;top:204px">DEFAULT</div>
<div class="mi" style="left:904px;top:228px">GENIE</div>
<div class="mi" style="left:904px;top:252px">MATT</div>
<div class="mi" style="left:904px;top:276px">PALINET</div>
<div class="mi" style="left:904px;top:300px">RUSH</div>
<div class="mi" style="left:904px;top:324px">SHARES</div>
<div class="mi" style="left:904px;top:348px">VIDEO</div>
<div style="left:873px;top:201px;width:20px;height:20px;background:#fde4a0;border:1px solid #f0bd5c;border-radius:2px"></div>
<svg style="position:absolute;left:876px;top:204px" width="14" height="14" viewBox="0 0 14 14"><path d="M3 8 L6 12 L11 2" fill="none" stroke="#1b2b6a" stroke-width="1.6"/></svg>
<div style="left:863px;top:54px;width:121px;height:320px;border:4px solid #c0462e"></div></body></html>
